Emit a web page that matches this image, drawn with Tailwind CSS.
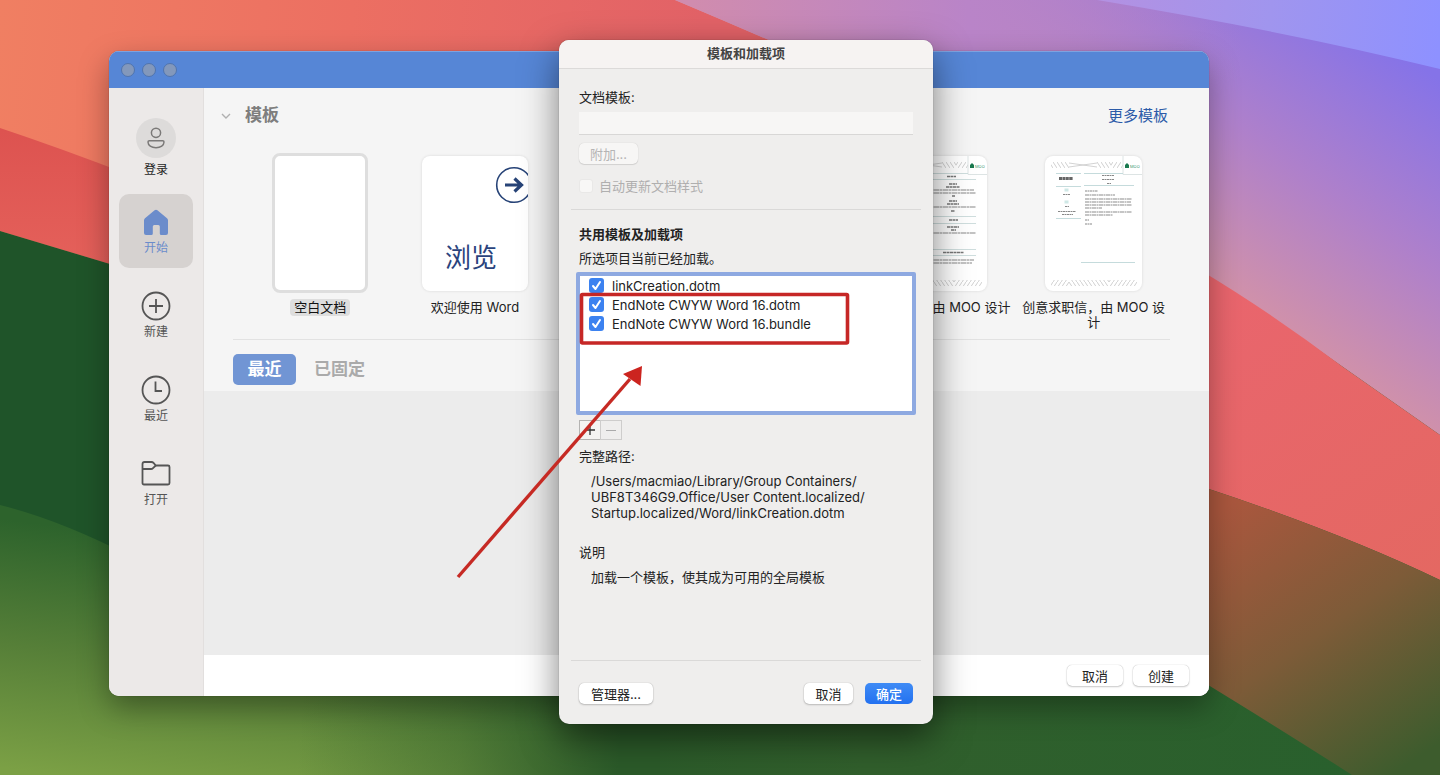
<!DOCTYPE html>
<html lang="zh-CN">
<head>
    <meta charset="UTF-8">
    <meta name="viewport" content="width=device-width, initial-scale=1.0">
    <title>模板和加载项</title>
    <script src="https://cdn.jsdelivr.net/npm/@tailwindcss/browser@4"></script>
</head>
<body class="font-['Inter','Noto_Sans_CJK_SC',sans-serif] text-[13px] text-[#222]">
    <div class="relative min-h-screen overflow-hidden bg-[#28592b]">

        <!-- Wallpaper -->
        <svg class="absolute inset-0 w-full h-full" viewBox="0 0 1440 775" preserveAspectRatio="none" aria-hidden="true">
            <defs>
                <linearGradient id="coral" gradientUnits="userSpaceOnUse" x1="0" y1="0" x2="700" y2="60">
                    <stop offset="0" stop-color="#f07f62" />
                    <stop offset="0.5" stop-color="#ec6f62" />
                    <stop offset="1" stop-color="#e26267" />
                </linearGradient>
                <linearGradient id="red" gradientUnits="userSpaceOnUse" x1="0" y1="130" x2="0" y2="260">
                    <stop offset="0" stop-color="#dd5350" />
                    <stop offset="1" stop-color="#e4605a" />
                </linearGradient>
                <linearGradient id="mauve" gradientUnits="userSpaceOnUse" x1="1440" y1="80" x2="1260" y2="330">
                    <stop offset="0" stop-color="#8573e8" />
                    <stop offset="0.5" stop-color="#ae80cb" />
                    <stop offset="1" stop-color="#d493a6" />
                </linearGradient>
                <linearGradient id="mauveTop" gradientUnits="userSpaceOnUse" x1="700" y1="60" x2="1240" y2="0">
                    <stop offset="0" stop-color="#d08cae" />
                    <stop offset="0.5" stop-color="#b984c8" />
                    <stop offset="1" stop-color="#ae80cb" stop-opacity="0" />
                </linearGradient>
                <linearGradient id="violet" gradientUnits="userSpaceOnUse" x1="1100" y1="0" x2="1440" y2="30">
                    <stop offset="0" stop-color="#b391e2" />
                    <stop offset="0.5" stop-color="#a095ee" />
                    <stop offset="1" stop-color="#8e91ff" />
                </linearGradient>
                <linearGradient id="coralRight" gradientUnits="userSpaceOnUse" x1="1210" y1="300" x2="1400" y2="600">
                    <stop offset="0" stop-color="#e9656d" />
                    <stop offset="1" stop-color="#e46862" />
                </linearGradient>
                <linearGradient id="brown" gradientUnits="userSpaceOnUse" x1="1220" y1="510" x2="1400" y2="770">
                    <stop offset="0" stop-color="#aa573e" />
                    <stop offset="0.5" stop-color="#7d5b38" />
                    <stop offset="1" stop-color="#3d5c2d" />
                </linearGradient>
                <linearGradient id="green" gradientUnits="userSpaceOnUse" x1="0" y1="0" x2="1440" y2="0">
                    <stop offset="0" stop-color="#1f5429" />
                    <stop offset="0.4" stop-color="#2a5a29" />
                    <stop offset="0.6" stop-color="#315f2c" />
                    <stop offset="1" stop-color="#27602d" />
                </linearGradient>
                <linearGradient id="meadow" gradientUnits="userSpaceOnUse" x1="90" y1="530" x2="60" y2="775">
                    <stop offset="0" stop-color="#2d632c" />
                    <stop offset="0.5" stop-color="#567f38" />
                    <stop offset="1" stop-color="#7ba045" />
                </linearGradient>
                <linearGradient id="meadowFade" gradientUnits="userSpaceOnUse" x1="300" y1="720" x2="620" y2="740">
                    <stop offset="0" stop-color="#2b5a29" stop-opacity="0" />
                    <stop offset="0.5" stop-color="#2b5a29" stop-opacity=".35" />
                    <stop offset="1" stop-color="#2b5a29" />
                </linearGradient>
            </defs>
            <rect width="1440" height="775" fill="url(#green)" />
            <path d="M0 0H900V300H0Z" fill="url(#coral)" />
            <path d="M0 128Q60 148 130 175V270L0 231Z" fill="url(#red)" />
            <path d="M0 231L130 270V600H0Z" fill="#1f5429" />
            <path d="M0 505Q60 520 130 556L640 640V775H0Z" fill="url(#meadow)" />
            <path d="M200 560H660V775H200Z" fill="url(#meadowFade)" />
            <path d="M675 0H1440V435L1343 367Q1270 315 1200 272L860 80Q770 40 675 0Z" fill="url(#mauve)" />
            <path d="M675 0H1240V80H860Q770 40 675 0Z" fill="url(#mauveTop)" />
            <path d="M1097 0Q1290 32 1440 69V0Z" fill="url(#violet)" />
            <path d="M1200 270Q1270 312 1343 367L1440 435V580Q1340 532 1200 486Z" fill="url(#coralRight)" />
            <path d="M1200 486Q1340 532 1440 580V775H1352Q1290 735 1200 680Z" fill="url(#brown)" />
        </svg>

        <!-- Word start window -->
        <main class="absolute top-[51px] bottom-[79px] left-[109px] right-[231px] flex flex-col rounded-[10px] overflow-hidden bg-white shadow-[0_12px_30px_rgba(0,0,0,0.35),0_0_1px_rgba(0,0,0,0.5)]">
            <header class="h-[37px] shrink-0 flex items-center gap-[7px] px-3 bg-[#5686d6] border-t border-[#7ea2df]">
                <button type="button" aria-label="关闭" class="w-[14px] h-[14px] rounded-full bg-[#8398bb] border border-[#5074ae]"></button>
                <button type="button" aria-label="最小化" class="w-[14px] h-[14px] rounded-full bg-[#8398bb] border border-[#5074ae]"></button>
                <button type="button" aria-label="缩放" class="w-[14px] h-[14px] rounded-full bg-[#8398bb] border border-[#5074ae]"></button>
            </header>

            <div class="flex flex-1 min-h-0">
                <!-- Sidebar -->
                <nav class="w-[95px] shrink-0 flex flex-col items-center gap-[10px] pt-[30px] bg-[#ece9e8] border-r border-[#e2dfde] text-xs text-[#555]">
                    <a href="#" class="h-[66px] flex flex-col items-center gap-1 text-[#1e1e1e]">
                        <span class="w-10 h-10 rounded-full bg-[#dddbda] flex items-center justify-center">
                            <svg class="w-6 h-6" viewBox="0 0 24 24" fill="none" stroke="#7b7978" stroke-width="1.5">
                                <circle cx="12" cy="6.800" r="4.600" />
                                <path d="M5.300 14.800h13.400q1.300 0 1.300 1.300c0 3.300-3.400 5.700-8 5.700s-8-2.400-8-5.700q0-1.300 1.300-1.300Z" />
                            </svg>
                        </span>
                        <span>登录</span>
                    </a>
                    <a href="#" class="w-[74px] h-[74px] rounded-[10px] bg-[#d6d2d0] flex flex-col items-center gap-[3px] pt-[13px] text-[#6b8ccb]">
                        <svg class="w-[30px] h-[30px]" viewBox="0 0 30 30" fill="#6b8ccb">
                            <path d="M13.600 3.200Q15 2.100 16.400 3.200L26 11.200Q27 12.100 27 13.500V26q0 2-2 2H20.300q-1.500 0-1.500-1.500V19.500q0-1.500-1.500-1.500H13.300q-1.500 0-1.500 1.500V26.500q0 1.500-1.500 1.500H5q-2 0-2-2V13.500Q3 12.100 4 11.200Z" />
                        </svg>
                        <span>开始</span>
                    </a>
                    <a href="#" class="w-[74px] h-[74px] flex flex-col items-center gap-[3px] pt-[13px]">
                        <svg class="w-[30px] h-[30px]" viewBox="0 0 30 30" fill="none" stroke="#555" stroke-width="1.8">
                            <circle cx="15" cy="15" r="13.500" />
                            <path d="M15 8v14M8 15h14" />
                        </svg>
                        <span>新建</span>
                    </a>
                    <a href="#" class="w-[74px] h-[74px] flex flex-col items-center gap-[3px] pt-[13px]">
                        <svg class="w-[30px] h-[30px]" viewBox="0 0 30 30" fill="none" stroke="#555" stroke-width="1.8">
                            <circle cx="15" cy="15" r="13.500" />
                            <path d="M14.500 6.500v9.500h6.500" />
                        </svg>
                        <span>最近</span>
                    </a>
                    <a href="#" class="w-[74px] h-[74px] flex flex-col items-center gap-[3px] pt-[13px]">
                        <svg class="w-[30px] h-[30px]" viewBox="0 0 30 30" fill="none" stroke="#555" stroke-width="1.8" stroke-linejoin="round">
                            <path d="M1.500 5q0-2 2-2H10.500q1.200 0 2 .9L14.800 6.500H27q1.500 0 1.500 1.500V24q0 1.500-1.500 1.500H3q-1.500 0-1.500-1.500Z" />
                            <path d="M1.500 10H10q1.200 0 2-.9L14.800 6.500" />
                        </svg>
                        <span>打开</span>
                    </a>
                </nav>

                <div class="flex-1 min-w-0 flex flex-col bg-[#ececec]">
                    <section class="bg-[#f5f5f5] pt-4 pb-[6px]">
                        <div class="flex items-center pl-4 pr-[41px] h-6">
                            <svg class="w-3 h-3 mr-[13px]" viewBox="0 0 12 12" fill="none" stroke="#b0b0b0" stroke-width="1.4">
                                <path d="M2 4l4 4 4-4" />
                            </svg>
                            <h1 class="text-[17px] font-bold text-[#7e7e7e]">模板</h1>
                            <a href="#" class="ml-auto text-[15px] text-[#2c5ba8]">更多模板</a>
                        </div>

                        <!-- Template cards -->
                        <div class="grid grid-cols-6 mt-[25px] pl-[39px] pr-[38px] h-[186px] leading-[15px] text-center">
                            <div class="flex flex-col items-center">
                                <div class="w-24 h-[140px] rounded-lg bg-white border-[3px] border-[#dedede]"></div>
                                <span class="mt-[6px] px-1 py-px rounded bg-[#dedede] text-[#111]">空白文档</span>
                            </div>
                            <div class="flex flex-col items-center pt-[3px]">
                                <div class="w-[106px] h-[135px] rounded-lg bg-white shadow-[0_0_3px_rgba(0,0,0,0.12)] overflow-hidden">
                                    <svg class="w-[106px] h-[74px]" viewBox="0 0 106 74" fill="none" stroke="#274377">
                                        <circle cx="92" cy="29" r="17.300" stroke-width="1.600" />
                                        <path d="M83 29h15M92.500 22.500l7 6.500-7 6.500" stroke-width="3.200" />
                                    </svg>
                                    <span class="block pr-2 text-[26px] leading-[52px] text-[#2a437d] font-['Noto_Sans_CJK_SC',sans-serif]">浏览</span>
                                </div>
                                <span class="mt-[9px]">欢迎使用 Word</span>
                            </div>
                            <div class="flex flex-col items-center pt-[3px]">
                                <div class="w-[97px] h-[135px] rounded-lg bg-white shadow-[0_0_3px_rgba(0,0,0,0.12)]"></div>
                            </div>
                            <div class="flex flex-col items-center pt-[3px]">
                                <div class="w-[97px] h-[135px] rounded-lg bg-white shadow-[0_0_3px_rgba(0,0,0,0.12)]"></div>
                            </div>
                            <div class="flex flex-col items-center pt-[3px]">
                                <svg class="w-[97px] h-[135px] shrink-0 rounded-lg bg-white shadow-[0_0_3px_rgba(0,0,0,0.12)]" viewBox="0 0 97 135" fill="none">
                                    <defs>
                                        <pattern id="hatchLeft" width="4" height="6" patternUnits="userSpaceOnUse">
                                            <path d="M0 0l4 6" stroke="#c4c4c4" stroke-width=".8" />
                                        </pattern>
                                        <pattern id="hatchRight" width="4" height="6" patternUnits="userSpaceOnUse">
                                            <path d="M4 0L0 6" stroke="#c4c4c4" stroke-width=".8" />
                                        </pattern>
                                    </defs>
                                    <path d="M6 6h18v6H6zM52 6h14v6H52zM24 124h40v6H24z" fill="url(#hatchLeft)" />
                                    <path d="M66 6h12v6H66zM6 124h18v6H6zM64 124h28v6H64z" fill="url(#hatchRight)" />
                                    <path d="M24 7l28 4M24 11l28-4" stroke="#c8c8c8" stroke-width=".8" />
                                    <path d="M78 0v18.500h19" stroke="#dde4e4" />
                                    <path d="M80 12V9l2-2 2 2v3z" fill="#19794f" />
                                    <text x="85" y="11.500" font-size="4" fill="#3b9572" font-family="Inter">MOO</text>
                                    <path d="M8 17.500h70M8 23.500h78M8 60.500h78M8 67.500h78M8 93.500h78M8 99.500h78" stroke="#cfdede" />
                                    <path d="M57 20.500h9M59 28h8M56 31h14M62 40h3M59 45h8M57 48h12M61 55h4M59 64h9M57 71h12M61 74h5M53 96.500h21" stroke="#777" stroke-width="1.300" stroke-dasharray="3 .5" />
                                    <path d="M8 34h76M8 37h78M8 51h78M8 77h78M8 104h76M8 107h74" stroke="#888" stroke-width="1.200" stroke-dasharray="5 .5 3 .5" />
                                </svg>
                                <span class="mt-[9px]">创意简历，由 MOO 设计</span>
                            </div>
                            <div class="flex flex-col items-center pt-[3px]">
                                <svg class="w-[97px] h-[135px] shrink-0 rounded-lg bg-white shadow-[0_0_3px_rgba(0,0,0,0.12)]" viewBox="0 0 97 135" fill="none">
                                    <path d="M6 6h18v6H6zM52 6h14v6H52zM24 124h40v6H24z" fill="url(#hatchLeft)" />
                                    <path d="M66 6h12v6H66zM6 124h18v6H6zM64 124h28v6H64z" fill="url(#hatchRight)" />
                                    <path d="M24 7l28 4M24 11l28-4" stroke="#c8c8c8" stroke-width=".8" />
                                    <path d="M78 0v18.500h19" stroke="#dde4e4" />
                                    <path d="M80 12V9l2-2 2 2v3z" fill="#19794f" />
                                    <text x="85" y="11.500" font-size="4" fill="#3b9572" font-family="Inter">MOO</text>
                                    <path d="M11 17.500h25M39 17.500h39M11 30.500h25M39 29.500h50M11 62.500h25M36 106.500h54" stroke="#c5dbdc" />
                                    <path d="M14 22.500h14" stroke="#666" stroke-width="3" stroke-dasharray="3 .4" />
                                    <path d="M19.500 32.500h4v3h-4zM19.500 44.500h4v3h-4z" fill="#cfe8e6" />
                                    <path d="M57 19.500h12M57 23.500h12M62 27.500h4M18 38.500h7M20 50.500h4M13 55.500h18M17 58.500h11M40 35h13M40 64h4M40 68h7" stroke="#888" stroke-width="1.100" stroke-dasharray="2 .5" />
                                    <path d="M40 39h30M40 43h47M40 46h46M40 49h47M40 52h17M40 56h47M40 59h28" stroke="#8b8b8b" stroke-width="1.200" stroke-dasharray="4 .5 2 .5" />
                                </svg>
                                <span class="mt-[9px] max-w-[146px]">创意求职信，由 MOO 设计</span>
                            </div>
                        </div>

                        <hr class="ml-[29px] mr-[39px] border-[#e2e2e2]">

                        <div class="flex items-center mt-[14px] ml-[29px] text-[17px] font-bold" role="tablist">
                            <button type="button" role="tab" aria-selected="true" class="w-[63px] h-[31px] rounded-[5px] bg-[#7195d4] text-white">最近</button>
                            <button type="button" role="tab" aria-selected="false" class="px-[18px] h-[31px] text-[#aaa]">已固定</button>
                        </div>
                    </section>

                    <footer class="mt-auto h-[41px] flex items-center justify-end gap-[10px] px-5 bg-white">
                        <button type="button" class="w-14 h-[21px] leading-5 rounded-[5px] bg-white shadow-[0_0_1px_rgba(0,0,0,0.3),0_1px_2px_rgba(0,0,0,0.2)]">取消</button>
                        <button type="button" class="w-14 h-[21px] leading-5 rounded-[5px] bg-white shadow-[0_0_1px_rgba(0,0,0,0.3),0_1px_2px_rgba(0,0,0,0.2)]">创建</button>
                    </footer>
                </div>
            </div>
        </main>

        <!-- Templates and add-ins dialog -->
        <div role="dialog" aria-labelledby="dialogTitle" class="absolute top-[40px] left-[559px] w-[374px] rounded-[10px] bg-[#efeeed] shadow-[0_14px_36px_rgba(0,0,0,0.5),0_0_1px_rgba(0,0,0,0.5)]">
            <h2 id="dialogTitle" class="h-[29px] leading-[26px] rounded-t-[10px] bg-[#f6f3f2] border-b border-[#dcdad9] text-center font-bold text-[#444]">模板和加载项</h2>

            <form class="px-5 leading-5" onsubmit="return false">
                <label for="docTemplate" class="block pt-[18px]">文档模板:</label>
                <input id="docTemplate" type="text" disabled class="block w-full h-[23px] mt-[5px] bg-[#f7f6f5] border-b border-[#d8d7d6]">
                <button type="button" disabled class="block w-[59px] h-[21px] mt-2 leading-5 rounded-[5px] bg-[#f7f6f5] text-[#b5b4b4] shadow-[0_0_1px_rgba(0,0,0,0.2),0_1px_1px_rgba(0,0,0,0.1)]">附加...</button>
                <div class="flex items-center gap-[6px] mt-3 text-[#b0afaf]">
                    <input id="autoUpdate" type="checkbox" disabled class="appearance-none w-[14px] h-[14px] rounded-[3px] bg-[#f8f7f6] border border-[#e9e8e7]">
                    <label for="autoUpdate">自动更新文档样式</label>
                </div>
                <hr class="-mx-2 mt-[13px] border-[#dad9d8]">

                <h3 class="mt-[14px] font-bold">共用模板及加载项</h3>
                <p class="mt-1">所选项目当前已经加载。</p>
                <ul id="addinList" class="-mx-[3px] mt-1 h-[143px] pl-[9px] bg-white border-4 border-[#8ea9e1] rounded-[2px]"></ul>
                <div class="flex mt-[5px]">
                    <button type="button" aria-label="添加" class="w-[22px] h-5 flex items-center justify-center bg-[#f4f3f2] border border-[#b4b3b2]">
                        <svg class="w-3 h-3" viewBox="0 0 12 12" stroke="#333" stroke-width="1.300"><path d="M6 1v10M1 6h10" /></svg>
                    </button>
                    <button type="button" aria-label="移除" class="w-[22px] h-5 -ml-px flex items-center justify-center border border-[#cecdcc]">
                        <svg class="w-3 h-3" viewBox="0 0 12 12" stroke="#aaa"><path d="M1 6.500h10" /></svg>
                    </button>
                </div>

                <h3 class="mt-[6px]">完整路径:</h3>
                <p class="mt-[7px] pl-3 h-12 leading-4">/Users/macmiao/Library/Group Containers/<br>UBF8T346G9.Office/User Content.localized/<br>Startup.localized/Word/linkCreation.dotm</p>
                <h3 class="mt-[21px]">说明</h3>
                <p class="mt-[5px] pl-3">加载一个模板，使其成为可用的全局模板</p>

                <hr class="-mx-2 mt-[73px] border-[#dad9d8]">
                <div class="flex items-center mt-[22px] pb-5">
                    <button type="button" class="w-[74px] h-[21px] leading-5 rounded-[5px] bg-white shadow-[0_0_1px_rgba(0,0,0,0.3),0_1px_2px_rgba(0,0,0,0.2)]">管理器...</button>
                    <button type="button" class="ml-auto w-[49px] h-[21px] leading-5 rounded-[5px] bg-white shadow-[0_0_1px_rgba(0,0,0,0.3),0_1px_2px_rgba(0,0,0,0.2)]">取消</button>
                    <button type="submit" class="ml-3 w-12 h-[21px] leading-5 rounded-[5px] bg-linear-to-b from-[#3f8bf5] to-[#2371f0] text-white font-medium">确定</button>
                </div>
            </form>
        </div>

        <!-- Callout box and arrow -->
        <svg class="absolute top-0 left-0 w-[1440px] h-[775px] pointer-events-none" viewBox="0 0 1440 775" fill="none" aria-hidden="true">
            <rect x="581.500" y="294.500" width="266" height="48.500" rx="1" stroke="#c62726" stroke-width="3.600" />
            <path d="M458 577L630 379" stroke="#c62a24" stroke-width="3.400" />
            <path d="M642 366L623 374L640.500 386Z" fill="#cc241f" />
        </svg>
    </div>

    <script>
        const addins = [
            'linkCreation.dotm',
            'EndNote CWYW Word 16.dotm',
            'EndNote CWYW Word 16.bundle'
        ];
        const list = document.getElementById('addinList');

        addins.forEach((name, i) => {
            const row = document.createElement('li');
            row.className = 'flex items-center gap-2 h-[19px]';
            row.innerHTML = `
                <span class="relative flex">
                    <input id="addin${i}" type="checkbox" checked class="appearance-none w-[15px] h-[15px] rounded-[3px] bg-[#3c82f0]">
                    <svg class="absolute inset-0 w-[15px] h-[15px] pointer-events-none" viewBox="0 0 15 15" fill="none" stroke="#fff" stroke-width="2" stroke-linecap="round" stroke-linejoin="round">
                        <path d="M4 8l2.500 3L11 4" />
                    </svg>
                </span>
                <label for="addin${i}">${name}</label>`;
            list.appendChild(row);
        });
    </script>
</body>
</html>
